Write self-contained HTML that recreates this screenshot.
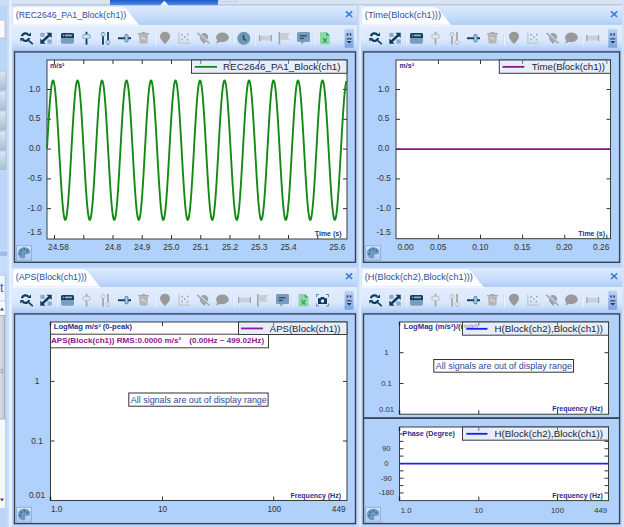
<!DOCTYPE html>
<html><head><meta charset="utf-8"><title>Signal Display</title>
<style>
html,body{margin:0;padding:0;background:#c3dafa;overflow:hidden}
svg{display:block}
text{font-family:"Liberation Sans",Arial,sans-serif}
.tk{font-size:8.3px;fill:#333}
.tks{font-size:7.7px}
.lg{font-size:9.75px;fill:#23232f}
.tab{font-size:9.4px;fill:#2f4e94}
.ax{font-size:7px;font-weight:bold;fill:#21328f}
.msg{font-size:9px;fill:#2b4a9d}
</style></head><body>
<svg width="624" height="527" viewBox="0 0 624 527">
<defs>
<linearGradient id="tabbar" x1="0" y1="0" x2="0" y2="1"><stop offset="0" stop-color="#deeafc"/><stop offset="0.5" stop-color="#cadffb"/><stop offset="1" stop-color="#b2d0fb"/></linearGradient>
<linearGradient id="tool" x1="0" y1="0" x2="0" y2="1"><stop offset="0" stop-color="#e2edfd"/><stop offset="0.55" stop-color="#dce9fc"/><stop offset="0.74" stop-color="#cfe1fb"/><stop offset="0.95" stop-color="#b2d0fa"/><stop offset="1" stop-color="#aacaf8"/></linearGradient>
<linearGradient id="ovf" x1="0" y1="0" x2="0" y2="1"><stop offset="0" stop-color="#bcd4f6"/><stop offset="0.5" stop-color="#94b8ec"/><stop offset="1" stop-color="#7ea5e0"/></linearGradient>
<linearGradient id="palbg" x1="0" y1="0" x2="0" y2="1"><stop offset="0" stop-color="#d6e5fb"/><stop offset="1" stop-color="#a9c8f5"/></linearGradient>
<linearGradient id="btn" x1="0" y1="0" x2="0" y2="1"><stop offset="0" stop-color="#dfe8f1"/><stop offset="1" stop-color="#a8bfd4"/></linearGradient>
<linearGradient id="topsel" x1="0" y1="0" x2="0" y2="1"><stop offset="0" stop-color="#1d5dc0"/><stop offset="1" stop-color="#4d90e6"/></linearGradient>
<linearGradient id="thumb" x1="0" y1="0" x2="1" y2="0"><stop offset="0" stop-color="#dde2e8"/><stop offset="1" stop-color="#c3c9d2"/></linearGradient>
</defs>

<rect x="0" y="0" width="624" height="527" fill="#c3dafa"/>
<rect x="0" y="0" width="624" height="5" fill="#c5daf7"/>
<rect x="12" y="0" width="612" height="4.5" fill="#dae4f2"/><rect x="12" y="3.9" width="612" height="1.9" fill="#bccade"/>
<rect x="110" y="0" width="108" height="5.2" fill="url(#topsel)"/><path d="M160 5.4 L164.3 0.8 L168.6 5.4 Z" fill="#f4f8fe"/>
<path d="M218.5 0 V1.2 H237 V0" fill="#eef3fa" stroke="#a9bcd8" stroke-width="0.8"/>
<rect x="622" y="0" width="2" height="527" fill="#d3e2f6"/>
<rect x="0" y="0" width="8" height="527" fill="#bcd6f8"/>
<rect x="0" y="0" width="8" height="5" fill="#cadcf6"/>
<rect x="7" y="0" width="2.4" height="527" fill="#cbdef9"/><rect x="9.2" y="0" width="2.6" height="527" fill="#e9f1fd"/>
<rect x="-1" y="20" width="6" height="18" fill="#fbfbfd" stroke="#d9b9c4" stroke-width="1"/>
<rect x="-1" y="71" width="7" height="18.6" fill="url(#btn)" stroke="#9fb6cf" stroke-width="0.6"/>
<rect x="-1" y="91" width="7" height="18.6" fill="url(#btn)" stroke="#9fb6cf" stroke-width="0.6"/>
<rect x="-1" y="111" width="7" height="18.6" fill="url(#btn)" stroke="#9fb6cf" stroke-width="0.6"/>
<rect x="-1" y="131" width="7" height="18.6" fill="url(#btn)" stroke="#9fb6cf" stroke-width="0.6"/>
<rect x="-1" y="151" width="7" height="18.6" fill="url(#btn)" stroke="#9fb6cf" stroke-width="0.6"/>
<rect x="0" y="251" width="7.2" height="5" fill="#9dbdec"/><rect x="0" y="250.4" width="7.2" height="0.9" fill="#dbe8fb"/>
<rect x="0" y="256" width="7.2" height="19" fill="#c7dcf9"/>
<rect x="-1" y="275" width="6.2" height="26" fill="#f0f5fd" stroke="#a7c0e6" stroke-width="0.8"/>
<text x="0" y="292.4" font-size="12.5" fill="#3d5fa6">t</text>
<rect x="0" y="301.5" width="5.4" height="206.5" fill="#f5f8fd"/><rect x="5.2" y="275" width="0.8" height="233" fill="#b6cdee"/>
<path d="M0 310.4 L2 307.6 L4 310.4 Z" fill="#3b4a66"/>
<rect x="-1" y="315.5" width="5.6" height="103.5" fill="url(#thumb)" stroke="#9aa5b5" stroke-width="0.8"/>
<path d="M0.5 369.5 H3.5 M0.5 371.2 H3.5 M0.5 372.9 H3.5" stroke="#8893a3" stroke-width="0.7"/>
<path d="M0 498.6 L2 501.4 L4 498.6 Z" fill="#3b4a66"/>
<rect x="0" y="508" width="7.2" height="19" fill="#bcd6f8"/>
<rect x="12" y="5.6" width="345" height="19" fill="url(#tabbar)"/>
<rect x="12" y="23.8" width="345" height="1.5" fill="#a2bee7"/>
<path d="M12.6 24.4 V9.7 Q12.6 6.7 15.6 6.7 H121.6 Q125.1 6.7 127.1 9.3 L138.6 24.4 Z" fill="#fdfeff" stroke="#d5e3f8" stroke-width="0.8"/>
<text class="tab" x="15.8" y="18" textLength="110.3" lengthAdjust="spacingAndGlyphs">(REC2646_PA1_Block(ch1))</text>
<path d="M346 11.4 l6.2 5.6 M352.2 11.4 l-6.2 5.6" stroke="#3579d8" stroke-width="1.5" fill="none"/>
<rect x="12" y="24.6" width="345" height="26" fill="url(#tool)"/>
<rect x="12" y="24.6" width="127" height="1" fill="#fdfeff"/>
<rect x="12" y="50.2" width="345" height="1.6" fill="#a8c8f8"/>
<rect x="12" y="51.6" width="345" height="212.4" fill="#b9d4fa"/>
<g transform="translate(20.2,32.5)" fill="none" stroke="#0d3b5c" stroke-width="2.2">
<path d="M1.63 3.62 A3.8 3.8 0 0 1 8.21 2.16"/><path d="M8.97 5.58 A3.8 3.8 0 0 1 2.39 7.04"/>
<path d="M10.8 0 L10.8 3.6 L6.9 3.6 Z" fill="#0d3b5c" stroke="none"/>
<path d="M0.1 5.4 L4 5.4 L0.1 9 Z" fill="#0d3b5c" stroke="none"/>
<path d="M8.6 8.2 L12.6 11.7" stroke-width="1.6"/></g>
<g transform="translate(40,32.5)">
<rect x="0.4" y="0.4" width="4.2" height="4" fill="#8aaac6"/><rect x="7.4" y="6.9" width="4.3" height="4.2" fill="#8aaac6"/>
<path d="M2.6 8.9 L9.4 2.5" stroke="#0d3b5c" stroke-width="2.5"/>
<path d="M6.5 0.2 L11.7 0.2 L11.7 5.4 Z" fill="#0d3b5c"/><path d="M0.3 6 L0.3 11.2 L5.5 11.2 Z" fill="#0d3b5c"/></g>
<rect x="56.7" y="33.5" width="1.2" height="12" fill="#eef4fd"/><rect x="55.9" y="33.5" width="0.8" height="12" fill="#b9d2f5" opacity="0.6"/>
<g transform="translate(61,33)">
<rect x="0" y="0" width="13" height="10.8" rx="1.7" fill="#7b9dbc"/>
<path d="M0 4.9 V1.7 A1.7 1.7 0 0 1 1.7 0 H11.3 A1.7 1.7 0 0 1 13 1.7 V4.9 Z" fill="#14405e"/>
<rect x="1.9" y="1.6" width="1" height="1.7" fill="#8fb0cc"/><rect x="3.8" y="1.6" width="7.2" height="1.7" rx="0.5" fill="#8fb0cc"/></g>
<g transform="translate(86.5,31.8)">
<rect x="-0.9" y="0" width="1.8" height="12.8" fill="#0d3b5c"/>
<rect x="-3.7" y="2.8" width="7.4" height="3.6" rx="1.3" fill="#d2e5f6" stroke="#86acd0" stroke-width="1.1"/></g>
<g transform="translate(103,32)">
<rect x="-0.9" y="0" width="1.8" height="12.6" fill="#0d3b5c"/><rect x="4.1" y="0" width="1.8" height="12.6" fill="#0d3b5c"/>
<circle cx="0" cy="2.3" r="1.9" fill="#c4dcf2" stroke="#6f98bd" stroke-width="0.8"/>
<circle cx="5" cy="10.2" r="1.9" fill="#c4dcf2" stroke="#6f98bd" stroke-width="0.8"/></g>
<g transform="translate(118,34.5)">
<rect x="0" y="2.8" width="13" height="1.9" fill="#0d3b5c"/>
<rect x="7" y="0" width="3" height="7.4" rx="1" fill="#a9cdea" stroke="#3d6f96" stroke-width="0.8"/></g>
<g transform="translate(138,32)">
<path d="M1 2.6 H10 L9.3 11.6 H1.7 Z" fill="#b4b4b4"/><rect x="0" y="1" width="11" height="1.5" fill="#a9a9a9"/><rect x="3.6" y="0" width="3.8" height="1.2" fill="#a9a9a9"/>
<path d="M2.6 6 L5.1 3.7 V5.2 C7.7 5.2 8.5 7.2 8 9.8 C7.4 7.9 6.6 7 5.1 7 V8.3 Z" fill="#d2d2d2"/></g>
<rect x="154.7" y="33.5" width="1.2" height="12" fill="#eef4fd"/><rect x="153.9" y="33.5" width="0.8" height="12" fill="#b9d2f5" opacity="0.6"/>
<path transform="translate(160,31.7)" d="M5 12.6 C3.2 10 0 7.8 0 4.8 A5 4.8 0 0 1 10 4.8 C10 7.8 6.8 10 5 12.6 Z" fill="#999"/>
<g transform="translate(178,32.5)">
<path d="M0.8 0 V10.6 H12" fill="none" stroke="#bfc6d0" stroke-width="1.3"/>
<g fill="#a3a3a3"><rect x="3.3" y="1.6" width="1.6" height="1.6"/><rect x="9" y="1.2" width="1.6" height="1.6"/><rect x="6" y="3.8" width="1.6" height="1.6"/><rect x="3.2" y="6.2" width="1.6" height="1.6"/><rect x="8.6" y="6.4" width="1.6" height="1.6"/></g></g>
<g transform="translate(197,32.5)">
<path d="M7 11.4 C5.5 9.2 2.8 7.4 2.8 4.7 A4.2 4.1 0 0 1 11.2 4.7 C11.2 7.4 8.5 9.2 7 11.4 Z" fill="#9f9f9f"/>
<path d="M0.6 0.3 L12.6 10.6" stroke="#c9dcf8" stroke-width="2.6"/><path d="M0.4 0.6 L12.4 10.9" stroke="#9a9a9a" stroke-width="1.2"/></g>
<g transform="translate(215.6,32.6)" fill="#9a9a9a">
<ellipse cx="6.8" cy="4.8" rx="6.4" ry="4.8"/><path d="M2.2 7 L0.4 11 L5.6 9 Z"/></g>
<rect x="233.2" y="33.5" width="1.2" height="12" fill="#eef4fd"/><rect x="232.4" y="33.5" width="0.8" height="12" fill="#b9d2f5" opacity="0.6"/>
<g transform="translate(237.2,31.7)">
<circle cx="6.6" cy="6.6" r="6.5" fill="#6f97b6"/><path d="M6.3 3 V7 L9 9" fill="none" stroke="#1d5070" stroke-width="1.6"/></g>
<rect x="254.7" y="33.5" width="1.2" height="12" fill="#eef4fd"/><rect x="253.9" y="33.5" width="0.8" height="12" fill="#b9d2f5" opacity="0.6"/>
<g transform="translate(259,35)">
<rect x="0.6" y="0.8" width="11.8" height="4.6" fill="#c9cfd7"/><rect x="0" y="0" width="1.2" height="6.2" fill="#a2a2a2"/><rect x="11.8" y="0" width="1.2" height="6.2" fill="#a2a2a2"/></g>
<g transform="translate(278.6,32)">
<rect x="0" y="0" width="1.6" height="12.6" fill="#a4a4a4"/><path d="M1.6 1 H11.4 L8.8 4.4 L11.4 7.8 H1.6 Z" fill="#c8cdd4"/></g>
<g transform="translate(297,32)">
<path d="M1.5 0 H11.5 A1.5 1.5 0 0 1 13 1.5 V8.5 A1.5 1.5 0 0 1 11.5 10 H7.2 L4.4 12.6 V10 H1.5 A1.5 1.5 0 0 1 0 8.5 V1.5 A1.5 1.5 0 0 1 1.5 0 Z" fill="#7a9bb9"/>
<rect x="2.8" y="3" width="6.8" height="1.4" fill="#245676"/><rect x="2.8" y="5.7" width="4.2" height="1.4" fill="#245676"/></g>
<rect x="314" y="33.5" width="1.2" height="12" fill="#eef4fd"/><rect x="313.2" y="33.5" width="0.8" height="12" fill="#b9d2f5" opacity="0.6"/>
<g transform="translate(320,32)">
<path d="M1 0 H6.2 L9.8 3.6 V11.4 A1 1 0 0 1 8.8 12.4 H1 A1 1 0 0 1 0 11.4 V1 A1 1 0 0 1 1 0 Z" fill="#8fd6aa"/>
<path d="M6.2 0 L9.8 3.6 H6.2 Z" fill="#1fa358"/>
<path d="M3 6.2 L6.8 10.6 M6.8 6.2 L3 10.6" stroke="#22a45a" stroke-width="1.3" fill="none"/></g>
<g transform="translate(344.6,28.8)">
<rect x="0" y="0" width="9" height="19" fill="url(#ovf)"/>
<rect x="2.2" y="4.6" width="1.4" height="2" fill="#1d2a44"/><rect x="5.2" y="4.6" width="1.4" height="2" fill="#1d2a44"/>
<rect x="2.2" y="9.6" width="4.8" height="1.3" fill="#1d2a44"/><path d="M2 12 H7.2 L4.6 14.8 Z" fill="#1d2a44"/>
<rect x="2.4" y="10.9" width="4.6" height="0.9" fill="#e8f0fc"/></g>
<rect x="14.5" y="51.9" width="341" height="210.4" fill="#b0d1fc" stroke="#3a4250" stroke-width="1.4"/>
<g transform="translate(16,245.2)">
<rect x="0.5" y="0.5" width="15" height="15" fill="url(#palbg)" stroke="#8fb0e0" stroke-width="1"/>
<path d="M8.2 2 C11.6 2 14.3 4.2 14.3 6.6 C14.3 8.6 12.6 9.2 11 9 C9.6 8.8 8.8 9.6 9.2 10.8 C9.6 12.2 9 13.4 7.4 13.4 C4.2 13.4 2 10.9 2 7.8 C2 4.5 4.8 2 8.2 2 Z" fill="#6d9abc"/>
<g fill="#2f6689"><circle cx="4.3" cy="8.6" r="0.9"/><circle cx="5.2" cy="5.4" r="0.9"/><circle cx="8.3" cy="4" r="0.9"/><circle cx="11.3" cy="5.5" r="0.9"/></g></g>
<rect x="47" y="60" width="300" height="179" fill="#fff" stroke="#3c3c3c" stroke-width="1"/>
<path d="M54.5 60 v4 M54.5 239 v-4 M83.75 60 v4 M83.75 239 v-4 M113 60 v4 M113 239 v-4 M142.25 60 v4 M142.25 239 v-4 M171.5 60 v4 M171.5 239 v-4 M200.75 60 v4 M200.75 239 v-4 M230 60 v4 M230 239 v-4 M259.25 60 v4 M259.25 239 v-4 M288.5 60 v4 M288.5 239 v-4 M317.75 60 v4 M317.75 239 v-4 M47 89.5 h4 M347 89.5 h-4 M47 119.3 h4 M347 119.3 h-4 M47 149.1 h4 M347 149.1 h-4 M47 178.9 h4 M347 178.9 h-4 M47 208.6 h4 M347 208.6 h-4" stroke="#333" stroke-width="1" fill="none"/>
<path d="M47 148.41 L47.5 139.5 L48 130.77 L48.5 122.36 L49 114.4 L49.5 107.03 L50 100.37 L50.5 94.53 L51 89.6 L51.5 85.67 L52 82.8 L52.5 81.03 L53 80.4 L53.5 80.92 L54 82.57 L54.5 85.33 L55 89.16 L55.5 93.99 L56 99.75 L56.5 106.33 L57 113.63 L57.5 121.54 L58 129.91 L58.5 138.62 L59 147.52 L59.5 156.46 L60 165.3 L60.5 173.89 L61 182.09 L61.5 189.77 L62 196.79 L62.5 203.06 L63 208.45 L63.5 212.89 L64 216.3 L64.5 218.63 L65 219.83 L65.5 219.88 L66 218.8 L66.5 216.58 L67 213.28 L67.5 208.94 L68 203.64 L68.5 197.46 L69 190.5 L69.5 182.88 L70 174.73 L70.5 166.17 L71 157.35 L71.5 148.41 L72 139.5 L72.5 130.77 L73 122.36 L73.5 114.4 L74 107.03 L74.5 100.37 L75 94.53 L75.5 89.6 L76 85.67 L76.5 82.8 L77 81.03 L77.5 80.4 L78 80.92 L78.5 82.57 L79 85.33 L79.5 89.16 L80 93.99 L80.5 99.75 L81 106.33 L81.5 113.63 L82 121.54 L82.5 129.91 L83 138.62 L83.5 147.52 L84 156.46 L84.5 165.3 L85 173.89 L85.5 182.09 L86 189.77 L86.5 196.79 L87 203.06 L87.5 208.45 L88 212.89 L88.5 216.3 L89 218.63 L89.5 219.83 L90 219.88 L90.5 218.8 L91 216.58 L91.5 213.28 L92 208.94 L92.5 203.64 L93 197.46 L93.5 190.5 L94 182.88 L94.5 174.73 L95 166.17 L95.5 157.35 L96 148.41 L96.5 139.5 L97 130.77 L97.5 122.36 L98 114.4 L98.5 107.03 L99 100.37 L99.5 94.53 L100 89.6 L100.5 85.67 L101 82.8 L101.5 81.03 L102 80.4 L102.5 80.92 L103 82.57 L103.5 85.33 L104 89.16 L104.5 93.99 L105 99.75 L105.5 106.33 L106 113.63 L106.5 121.54 L107 129.91 L107.5 138.62 L108 147.52 L108.5 156.46 L109 165.3 L109.5 173.89 L110 182.09 L110.5 189.77 L111 196.79 L111.5 203.06 L112 208.45 L112.5 212.89 L113 216.3 L113.5 218.63 L114 219.83 L114.5 219.88 L115 218.8 L115.5 216.58 L116 213.28 L116.5 208.94 L117 203.64 L117.5 197.46 L118 190.5 L118.5 182.88 L119 174.73 L119.5 166.17 L120 157.35 L120.5 148.41 L121 139.5 L121.5 130.77 L122 122.36 L122.5 114.4 L123 107.03 L123.5 100.37 L124 94.53 L124.5 89.6 L125 85.67 L125.5 82.8 L126 81.03 L126.5 80.4 L127 80.92 L127.5 82.57 L128 85.33 L128.5 89.16 L129 93.99 L129.5 99.75 L130 106.33 L130.5 113.63 L131 121.54 L131.5 129.91 L132 138.62 L132.5 147.52 L133 156.46 L133.5 165.3 L134 173.89 L134.5 182.09 L135 189.77 L135.5 196.79 L136 203.06 L136.5 208.45 L137 212.89 L137.5 216.3 L138 218.63 L138.5 219.83 L139 219.88 L139.5 218.8 L140 216.58 L140.5 213.28 L141 208.94 L141.5 203.64 L142 197.46 L142.5 190.5 L143 182.88 L143.5 174.73 L144 166.17 L144.5 157.35 L145 148.41 L145.5 139.5 L146 130.77 L146.5 122.36 L147 114.4 L147.5 107.03 L148 100.37 L148.5 94.53 L149 89.6 L149.5 85.67 L150 82.8 L150.5 81.03 L151 80.4 L151.5 80.92 L152 82.57 L152.5 85.33 L153 89.16 L153.5 93.99 L154 99.75 L154.5 106.33 L155 113.63 L155.5 121.54 L156 129.91 L156.5 138.62 L157 147.52 L157.5 156.46 L158 165.3 L158.5 173.89 L159 182.09 L159.5 189.77 L160 196.79 L160.5 203.06 L161 208.45 L161.5 212.89 L162 216.3 L162.5 218.63 L163 219.83 L163.5 219.88 L164 218.8 L164.5 216.58 L165 213.28 L165.5 208.94 L166 203.64 L166.5 197.46 L167 190.5 L167.5 182.88 L168 174.73 L168.5 166.17 L169 157.35 L169.5 148.41 L170 139.5 L170.5 130.77 L171 122.36 L171.5 114.4 L172 107.03 L172.5 100.37 L173 94.53 L173.5 89.6 L174 85.67 L174.5 82.8 L175 81.03 L175.5 80.4 L176 80.92 L176.5 82.57 L177 85.33 L177.5 89.16 L178 93.99 L178.5 99.75 L179 106.33 L179.5 113.63 L180 121.54 L180.5 129.91 L181 138.62 L181.5 147.52 L182 156.46 L182.5 165.3 L183 173.89 L183.5 182.09 L184 189.77 L184.5 196.79 L185 203.06 L185.5 208.45 L186 212.89 L186.5 216.3 L187 218.63 L187.5 219.83 L188 219.88 L188.5 218.8 L189 216.58 L189.5 213.28 L190 208.94 L190.5 203.64 L191 197.46 L191.5 190.5 L192 182.88 L192.5 174.73 L193 166.17 L193.5 157.35 L194 148.41 L194.5 139.5 L195 130.77 L195.5 122.36 L196 114.4 L196.5 107.03 L197 100.37 L197.5 94.53 L198 89.6 L198.5 85.67 L199 82.8 L199.5 81.03 L200 80.4 L200.5 80.92 L201 82.57 L201.5 85.33 L202 89.16 L202.5 93.99 L203 99.75 L203.5 106.33 L204 113.63 L204.5 121.54 L205 129.91 L205.5 138.62 L206 147.52 L206.5 156.46 L207 165.3 L207.5 173.89 L208 182.09 L208.5 189.77 L209 196.79 L209.5 203.06 L210 208.45 L210.5 212.89 L211 216.3 L211.5 218.63 L212 219.83 L212.5 219.88 L213 218.8 L213.5 216.58 L214 213.28 L214.5 208.94 L215 203.64 L215.5 197.46 L216 190.5 L216.5 182.88 L217 174.73 L217.5 166.17 L218 157.35 L218.5 148.41 L219 139.5 L219.5 130.77 L220 122.36 L220.5 114.4 L221 107.03 L221.5 100.37 L222 94.53 L222.5 89.6 L223 85.67 L223.5 82.8 L224 81.03 L224.5 80.4 L225 80.92 L225.5 82.57 L226 85.33 L226.5 89.16 L227 93.99 L227.5 99.75 L228 106.33 L228.5 113.63 L229 121.54 L229.5 129.91 L230 138.62 L230.5 147.52 L231 156.46 L231.5 165.3 L232 173.89 L232.5 182.09 L233 189.77 L233.5 196.79 L234 203.06 L234.5 208.45 L235 212.89 L235.5 216.3 L236 218.63 L236.5 219.83 L237 219.88 L237.5 218.8 L238 216.58 L238.5 213.28 L239 208.94 L239.5 203.64 L240 197.46 L240.5 190.5 L241 182.88 L241.5 174.73 L242 166.17 L242.5 157.35 L243 148.41 L243.5 139.5 L244 130.77 L244.5 122.36 L245 114.4 L245.5 107.03 L246 100.37 L246.5 94.53 L247 89.6 L247.5 85.67 L248 82.8 L248.5 81.03 L249 80.4 L249.5 80.92 L250 82.57 L250.5 85.33 L251 89.16 L251.5 93.99 L252 99.75 L252.5 106.33 L253 113.63 L253.5 121.54 L254 129.91 L254.5 138.62 L255 147.52 L255.5 156.46 L256 165.3 L256.5 173.89 L257 182.09 L257.5 189.77 L258 196.79 L258.5 203.06 L259 208.45 L259.5 212.89 L260 216.3 L260.5 218.63 L261 219.83 L261.5 219.88 L262 218.8 L262.5 216.58 L263 213.28 L263.5 208.94 L264 203.64 L264.5 197.46 L265 190.5 L265.5 182.88 L266 174.73 L266.5 166.17 L267 157.35 L267.5 148.41 L268 139.5 L268.5 130.77 L269 122.36 L269.5 114.4 L270 107.03 L270.5 100.37 L271 94.53 L271.5 89.6 L272 85.67 L272.5 82.8 L273 81.03 L273.5 80.4 L274 80.92 L274.5 82.57 L275 85.33 L275.5 89.16 L276 93.99 L276.5 99.75 L277 106.33 L277.5 113.63 L278 121.54 L278.5 129.91 L279 138.62 L279.5 147.52 L280 156.46 L280.5 165.3 L281 173.89 L281.5 182.09 L282 189.77 L282.5 196.79 L283 203.06 L283.5 208.45 L284 212.89 L284.5 216.3 L285 218.63 L285.5 219.83 L286 219.88 L286.5 218.8 L287 216.58 L287.5 213.28 L288 208.94 L288.5 203.64 L289 197.46 L289.5 190.5 L290 182.88 L290.5 174.73 L291 166.17 L291.5 157.35 L292 148.41 L292.5 139.5 L293 130.77 L293.5 122.36 L294 114.4 L294.5 107.03 L295 100.37 L295.5 94.53 L296 89.6 L296.5 85.67 L297 82.8 L297.5 81.03 L298 80.4 L298.5 80.92 L299 82.57 L299.5 85.33 L300 89.16 L300.5 93.99 L301 99.75 L301.5 106.33 L302 113.63 L302.5 121.54 L303 129.91 L303.5 138.62 L304 147.52 L304.5 156.46 L305 165.3 L305.5 173.89 L306 182.09 L306.5 189.77 L307 196.79 L307.5 203.06 L308 208.45 L308.5 212.89 L309 216.3 L309.5 218.63 L310 219.83 L310.5 219.88 L311 218.8 L311.5 216.58 L312 213.28 L312.5 208.94 L313 203.64 L313.5 197.46 L314 190.5 L314.5 182.88 L315 174.73 L315.5 166.17 L316 157.35 L316.5 148.41 L317 139.5 L317.5 130.77 L318 122.36 L318.5 114.4 L319 107.03 L319.5 100.37 L320 94.53 L320.5 89.6 L321 85.67 L321.5 82.8 L322 81.03 L322.5 80.4 L323 80.92 L323.5 82.57 L324 85.33 L324.5 89.16 L325 93.99 L325.5 99.75 L326 106.33 L326.5 113.63 L327 121.54 L327.5 129.91 L328 138.62 L328.5 147.52 L329 156.46 L329.5 165.3 L330 173.89 L330.5 182.09 L331 189.77 L331.5 196.79 L332 203.06 L332.5 208.45 L333 212.89 L333.5 216.3 L334 218.63 L334.5 219.83 L335 219.88 L335.5 218.8 L336 216.58 L336.5 213.28 L337 208.94 L337.5 203.64 L338 197.46 L338.5 190.5 L339 182.88 L339.5 174.73 L340 166.17 L340.5 157.35 L341 148.41 L341.5 139.5 L342 130.77 L342.5 122.36 L343 114.4 L343.5 107.03 L344 100.37 L344.5 94.53 L345 89.6 L345.5 85.67 L346 82.8 L346.5 81.03" fill="none" stroke="#148a14" stroke-width="1.9" stroke-linejoin="round"/>
<rect x="191.5" y="60" width="155.5" height="13.3" fill="#e6eefc" stroke="#3c3c3c" stroke-width="1"/><path d="M194.8 66.85 H217" stroke="#148a14" stroke-width="1.8"/><text class="lg" x="223" y="70.35" textLength="117.6" lengthAdjust="spacingAndGlyphs">REC2646_PA1_Block(ch1)</text>
<path d="M200.75 60 v4 M230 60 v4 M259.25 60 v4 M288.5 60 v4 M317.75 60 v4" stroke="#555" stroke-width="0.8"/>
<text class="ax" x="50" y="67.8" font-size="7.4">m/s²</text>
<text class="tk" x="34.7" y="91.5" text-anchor="middle">1.0</text>
<text class="tk" x="34.7" y="121.3" text-anchor="middle">0.5</text>
<text class="tk" x="34.7" y="151.1" text-anchor="middle">0.0</text>
<text class="tk" x="34.7" y="180.9" text-anchor="middle">-0.5</text>
<text class="tk" x="34.7" y="210.6" text-anchor="middle">-1.0</text>
<text class="tk" x="34.7" y="235.2" text-anchor="middle">-1.5</text>
<text class="tk" x="58.4" y="250" text-anchor="middle">24.58</text>
<text class="tk" x="113" y="250" text-anchor="middle">24.8</text>
<text class="tk" x="142.2" y="250" text-anchor="middle">24.9</text>
<text class="tk" x="171.4" y="250" text-anchor="middle">25.0</text>
<text class="tk" x="200.7" y="250" text-anchor="middle">25.1</text>
<text class="tk" x="230" y="250" text-anchor="middle">25.2</text>
<text class="tk" x="259.2" y="250" text-anchor="middle">25.3</text>
<text class="tk" x="288.5" y="250" text-anchor="middle">25.4</text>
<text class="tk" x="337.3" y="250" text-anchor="middle">25.6</text>
<text class="ax" x="341.5" y="236" text-anchor="end">Time (s)</text>
<rect x="361" y="5.6" width="261" height="19" fill="url(#tabbar)"/>
<rect x="361" y="23.8" width="261" height="1.5" fill="#a2bee7"/>
<path d="M361.6 24.4 V9.7 Q361.6 6.7 364.6 6.7 H433.6 Q437.1 6.7 439.1 9.3 L450.6 24.4 Z" fill="#fdfeff" stroke="#d5e3f8" stroke-width="0.8"/>
<text class="tab" x="364.8" y="18" textLength="76.2" lengthAdjust="spacingAndGlyphs">(Time(Block(ch1)))</text>
<path d="M611 11.4 l6.2 5.6 M617.2 11.4 l-6.2 5.6" stroke="#3579d8" stroke-width="1.5" fill="none"/>
<rect x="361" y="24.6" width="261" height="26" fill="url(#tool)"/>
<rect x="361" y="24.6" width="90" height="1" fill="#fdfeff"/>
<rect x="361" y="50.2" width="261" height="1.6" fill="#a8c8f8"/>
<rect x="361" y="51.6" width="261" height="212.4" fill="#b9d4fa"/>
<g transform="translate(369.2,32.5)" fill="none" stroke="#0d3b5c" stroke-width="2.2">
<path d="M1.63 3.62 A3.8 3.8 0 0 1 8.21 2.16"/><path d="M8.97 5.58 A3.8 3.8 0 0 1 2.39 7.04"/>
<path d="M10.8 0 L10.8 3.6 L6.9 3.6 Z" fill="#0d3b5c" stroke="none"/>
<path d="M0.1 5.4 L4 5.4 L0.1 9 Z" fill="#0d3b5c" stroke="none"/>
<path d="M8.6 8.2 L12.6 11.7" stroke-width="1.6"/></g>
<g transform="translate(389,32.5)">
<rect x="0.4" y="0.4" width="4.2" height="4" fill="#8aaac6"/><rect x="7.4" y="6.9" width="4.3" height="4.2" fill="#8aaac6"/>
<path d="M2.6 8.9 L9.4 2.5" stroke="#0d3b5c" stroke-width="2.5"/>
<path d="M6.5 0.2 L11.7 0.2 L11.7 5.4 Z" fill="#0d3b5c"/><path d="M0.3 6 L0.3 11.2 L5.5 11.2 Z" fill="#0d3b5c"/></g>
<rect x="405.7" y="33.5" width="1.2" height="12" fill="#eef4fd"/><rect x="404.9" y="33.5" width="0.8" height="12" fill="#b9d2f5" opacity="0.6"/>
<g transform="translate(410,33)">
<rect x="0" y="0" width="13" height="10.8" rx="1.7" fill="#7b9dbc"/>
<path d="M0 4.9 V1.7 A1.7 1.7 0 0 1 1.7 0 H11.3 A1.7 1.7 0 0 1 13 1.7 V4.9 Z" fill="#14405e"/>
<rect x="1.9" y="1.6" width="1" height="1.7" fill="#8fb0cc"/><rect x="3.8" y="1.6" width="7.2" height="1.7" rx="0.5" fill="#8fb0cc"/></g>
<g transform="translate(435.5,31.8)">
<rect x="-0.9" y="0" width="1.8" height="12.8" fill="#a8a8a8"/>
<rect x="-3.7" y="2.8" width="7.4" height="3.6" rx="1.3" fill="#e3eaf3" stroke="#bdc4cd" stroke-width="1.1"/></g>
<g transform="translate(452,32)">
<rect x="-0.9" y="0" width="1.8" height="12.6" fill="#a8a8a8"/><rect x="4.1" y="0" width="1.8" height="12.6" fill="#a8a8a8"/>
<circle cx="0" cy="2.3" r="1.9" fill="#dfe6ef" stroke="#b4bac2" stroke-width="0.8"/>
<circle cx="5" cy="10.2" r="1.9" fill="#dfe6ef" stroke="#b4bac2" stroke-width="0.8"/></g>
<g transform="translate(467,34.5)">
<rect x="0" y="2.8" width="13" height="1.9" fill="#0d3b5c"/>
<rect x="7" y="0" width="3" height="7.4" rx="1" fill="#a9cdea" stroke="#3d6f96" stroke-width="0.8"/></g>
<g transform="translate(487,32)">
<path d="M1 2.6 H10 L9.3 11.6 H1.7 Z" fill="#b4b4b4"/><rect x="0" y="1" width="11" height="1.5" fill="#a9a9a9"/><rect x="3.6" y="0" width="3.8" height="1.2" fill="#a9a9a9"/>
<path d="M2.6 6 L5.1 3.7 V5.2 C7.7 5.2 8.5 7.2 8 9.8 C7.4 7.9 6.6 7 5.1 7 V8.3 Z" fill="#d2d2d2"/></g>
<rect x="503.7" y="33.5" width="1.2" height="12" fill="#eef4fd"/><rect x="502.9" y="33.5" width="0.8" height="12" fill="#b9d2f5" opacity="0.6"/>
<path transform="translate(509,31.7)" d="M5 12.6 C3.2 10 0 7.8 0 4.8 A5 4.8 0 0 1 10 4.8 C10 7.8 6.8 10 5 12.6 Z" fill="#999"/>
<g transform="translate(527,32.5)">
<path d="M0.8 0 V10.6 H12" fill="none" stroke="#bfc6d0" stroke-width="1.3"/>
<g fill="#a3a3a3"><rect x="3.3" y="1.6" width="1.6" height="1.6"/><rect x="9" y="1.2" width="1.6" height="1.6"/><rect x="6" y="3.8" width="1.6" height="1.6"/><rect x="3.2" y="6.2" width="1.6" height="1.6"/><rect x="8.6" y="6.4" width="1.6" height="1.6"/></g></g>
<g transform="translate(546,32.5)">
<path d="M7 11.4 C5.5 9.2 2.8 7.4 2.8 4.7 A4.2 4.1 0 0 1 11.2 4.7 C11.2 7.4 8.5 9.2 7 11.4 Z" fill="#9f9f9f"/>
<path d="M0.6 0.3 L12.6 10.6" stroke="#c9dcf8" stroke-width="2.6"/><path d="M0.4 0.6 L12.4 10.9" stroke="#9a9a9a" stroke-width="1.2"/></g>
<g transform="translate(564.6,32.6)" fill="#9a9a9a">
<ellipse cx="6.8" cy="4.8" rx="6.4" ry="4.8"/><path d="M2.2 7 L0.4 11 L5.6 9 Z"/></g>
<rect x="582.2" y="33.5" width="1.2" height="12" fill="#eef4fd"/><rect x="581.4" y="33.5" width="0.8" height="12" fill="#b9d2f5" opacity="0.6"/>
<g transform="translate(586.2,35)">
<rect x="0.6" y="0.8" width="11.8" height="4.6" fill="#c9cfd7"/><rect x="0" y="0" width="1.2" height="6.2" fill="#a2a2a2"/><rect x="11.8" y="0" width="1.2" height="6.2" fill="#a2a2a2"/></g>
<g transform="translate(608.2,28.8)">
<rect x="0" y="0" width="9" height="19" fill="url(#ovf)"/>
<rect x="2.2" y="4.6" width="1.4" height="2" fill="#1d2a44"/><rect x="5.2" y="4.6" width="1.4" height="2" fill="#1d2a44"/>
<rect x="2.2" y="9.6" width="4.8" height="1.3" fill="#1d2a44"/><path d="M2 12 H7.2 L4.6 14.8 Z" fill="#1d2a44"/>
<rect x="2.4" y="10.9" width="4.6" height="0.9" fill="#e8f0fc"/></g>
<rect x="363.5" y="51.9" width="256.1" height="210.4" fill="#b0d1fc" stroke="#3a4250" stroke-width="1.4"/>
<g transform="translate(365,245.2)">
<rect x="0.5" y="0.5" width="15" height="15" fill="url(#palbg)" stroke="#8fb0e0" stroke-width="1"/>
<path d="M8.2 2 C11.6 2 14.3 4.2 14.3 6.6 C14.3 8.6 12.6 9.2 11 9 C9.6 8.8 8.8 9.6 9.2 10.8 C9.6 12.2 9 13.4 7.4 13.4 C4.2 13.4 2 10.9 2 7.8 C2 4.5 4.8 2 8.2 2 Z" fill="#6d9abc"/>
<g fill="#2f6689"><circle cx="4.3" cy="8.6" r="0.9"/><circle cx="5.2" cy="5.4" r="0.9"/><circle cx="8.3" cy="4" r="0.9"/><circle cx="11.3" cy="5.5" r="0.9"/></g></g>
<rect x="396" y="60" width="214.5" height="178.7" fill="#fff" stroke="#3c3c3c" stroke-width="1"/>
<path d="M438.4 60 v4 M438.4 238.7 v-4 M480.5 60 v4 M480.5 238.7 v-4 M522.6 60 v4 M522.6 238.7 v-4 M564.7 60 v4 M564.7 238.7 v-4 M606.8 60 v4 M606.8 238.7 v-4 M396 89.5 h4 M610.5 89.5 h-4 M396 119.3 h4 M610.5 119.3 h-4 M396 149.1 h4 M610.5 149.1 h-4 M396 178.9 h4 M610.5 178.9 h-4 M396 208.6 h4 M610.5 208.6 h-4" stroke="#333" stroke-width="1" fill="none"/>
<path d="M396 149.1 H610.5" stroke="#8a158a" stroke-width="1.9"/>
<rect x="499.3" y="60" width="111.2" height="13.3" fill="#e6eefc" stroke="#3c3c3c" stroke-width="1"/><path d="M502.5 66.85 H524.3" stroke="#8a158a" stroke-width="1.8"/><text class="lg" x="531.8" y="70.35" textLength="73.2" lengthAdjust="spacingAndGlyphs">Time(Block(ch1))</text>
<path d="M522.6 60 v4 M564.7 60 v4 M606.8 60 v4" stroke="#555" stroke-width="0.8"/>
<text class="ax" x="399.6" y="67.8" font-size="7.4">m/s²</text>
<text class="tk" x="383.7" y="91.5" text-anchor="middle">1.0</text>
<text class="tk" x="383.7" y="121.3" text-anchor="middle">0.5</text>
<text class="tk" x="383.7" y="151.1" text-anchor="middle">0.0</text>
<text class="tk" x="383.7" y="180.9" text-anchor="middle">-0.5</text>
<text class="tk" x="383.7" y="210.6" text-anchor="middle">-1.0</text>
<text class="tk" x="383.7" y="235.2" text-anchor="middle">-1.5</text>
<text class="tk" x="405.5" y="250.2" text-anchor="middle">0.00</text>
<text class="tk" x="438.2" y="250.2" text-anchor="middle">0.05</text>
<text class="tk" x="480.4" y="250.2" text-anchor="middle">0.10</text>
<text class="tk" x="522.4" y="250.2" text-anchor="middle">0.15</text>
<text class="tk" x="564.4" y="250.2" text-anchor="middle">0.20</text>
<text class="tk" x="601.2" y="250.2" text-anchor="middle">0.26</text>
<text class="ax" x="605" y="236.4" text-anchor="end">Time (s)</text>
<rect x="12" y="267.6" width="345" height="19" fill="url(#tabbar)"/>
<rect x="12" y="285.8" width="345" height="1.5" fill="#a2bee7"/>
<path d="M12.6 286.4 V271.7 Q12.6 268.7 15.6 268.7 H82.6 Q86.1 268.7 88.1 271.3 L99.6 286.4 Z" fill="#fdfeff" stroke="#d5e3f8" stroke-width="0.8"/>
<text class="tab" x="15.8" y="280" textLength="71" lengthAdjust="spacingAndGlyphs">(APS(Block(ch1)))</text>
<path d="M346 273.4 l6.2 5.6 M352.2 273.4 l-6.2 5.6" stroke="#3579d8" stroke-width="1.5" fill="none"/>
<rect x="12" y="286.6" width="345" height="26" fill="url(#tool)"/>
<rect x="12" y="286.6" width="88" height="1" fill="#fdfeff"/>
<rect x="12" y="312.2" width="345" height="1.6" fill="#a8c8f8"/>
<rect x="12" y="313.6" width="345" height="212.4" fill="#b9d4fa"/>
<g transform="translate(20.2,294.5)" fill="none" stroke="#0d3b5c" stroke-width="2.2">
<path d="M1.63 3.62 A3.8 3.8 0 0 1 8.21 2.16"/><path d="M8.97 5.58 A3.8 3.8 0 0 1 2.39 7.04"/>
<path d="M10.8 0 L10.8 3.6 L6.9 3.6 Z" fill="#0d3b5c" stroke="none"/>
<path d="M0.1 5.4 L4 5.4 L0.1 9 Z" fill="#0d3b5c" stroke="none"/>
<path d="M8.6 8.2 L12.6 11.7" stroke-width="1.6"/></g>
<g transform="translate(40,294.5)">
<rect x="0.4" y="0.4" width="4.2" height="4" fill="#8aaac6"/><rect x="7.4" y="6.9" width="4.3" height="4.2" fill="#8aaac6"/>
<path d="M2.6 8.9 L9.4 2.5" stroke="#0d3b5c" stroke-width="2.5"/>
<path d="M6.5 0.2 L11.7 0.2 L11.7 5.4 Z" fill="#0d3b5c"/><path d="M0.3 6 L0.3 11.2 L5.5 11.2 Z" fill="#0d3b5c"/></g>
<rect x="56.7" y="295.5" width="1.2" height="12" fill="#eef4fd"/><rect x="55.9" y="295.5" width="0.8" height="12" fill="#b9d2f5" opacity="0.6"/>
<g transform="translate(61,295)">
<rect x="0" y="0" width="13" height="10.8" rx="1.7" fill="#7b9dbc"/>
<path d="M0 4.9 V1.7 A1.7 1.7 0 0 1 1.7 0 H11.3 A1.7 1.7 0 0 1 13 1.7 V4.9 Z" fill="#14405e"/>
<rect x="1.9" y="1.6" width="1" height="1.7" fill="#8fb0cc"/><rect x="3.8" y="1.6" width="7.2" height="1.7" rx="0.5" fill="#8fb0cc"/></g>
<g transform="translate(86.5,293.8)">
<rect x="-0.9" y="0" width="1.8" height="12.8" fill="#a8a8a8"/>
<rect x="-3.7" y="2.8" width="7.4" height="3.6" rx="1.3" fill="#e3eaf3" stroke="#bdc4cd" stroke-width="1.1"/></g>
<g transform="translate(103,294)">
<rect x="-0.9" y="0" width="1.8" height="12.6" fill="#a8a8a8"/><rect x="4.1" y="0" width="1.8" height="12.6" fill="#a8a8a8"/>
<circle cx="0" cy="2.3" r="1.9" fill="#dfe6ef" stroke="#b4bac2" stroke-width="0.8"/>
<circle cx="5" cy="10.2" r="1.9" fill="#dfe6ef" stroke="#b4bac2" stroke-width="0.8"/></g>
<g transform="translate(118,296.5)">
<rect x="0" y="2.8" width="13" height="1.9" fill="#0d3b5c"/>
<rect x="7" y="0" width="3" height="7.4" rx="1" fill="#a9cdea" stroke="#3d6f96" stroke-width="0.8"/></g>
<g transform="translate(138,294)">
<path d="M1 2.6 H10 L9.3 11.6 H1.7 Z" fill="#b4b4b4"/><rect x="0" y="1" width="11" height="1.5" fill="#a9a9a9"/><rect x="3.6" y="0" width="3.8" height="1.2" fill="#a9a9a9"/>
<path d="M2.6 6 L5.1 3.7 V5.2 C7.7 5.2 8.5 7.2 8 9.8 C7.4 7.9 6.6 7 5.1 7 V8.3 Z" fill="#d2d2d2"/></g>
<rect x="154.7" y="295.5" width="1.2" height="12" fill="#eef4fd"/><rect x="153.9" y="295.5" width="0.8" height="12" fill="#b9d2f5" opacity="0.6"/>
<path transform="translate(160,293.7)" d="M5 12.6 C3.2 10 0 7.8 0 4.8 A5 4.8 0 0 1 10 4.8 C10 7.8 6.8 10 5 12.6 Z" fill="#999"/>
<g transform="translate(178,294.5)">
<path d="M0.8 0 V10.6 H12" fill="none" stroke="#bfc6d0" stroke-width="1.3"/>
<g fill="#a3a3a3"><rect x="3.3" y="1.6" width="1.6" height="1.6"/><rect x="9" y="1.2" width="1.6" height="1.6"/><rect x="6" y="3.8" width="1.6" height="1.6"/><rect x="3.2" y="6.2" width="1.6" height="1.6"/><rect x="8.6" y="6.4" width="1.6" height="1.6"/></g></g>
<g transform="translate(197,294.5)">
<path d="M7 11.4 C5.5 9.2 2.8 7.4 2.8 4.7 A4.2 4.1 0 0 1 11.2 4.7 C11.2 7.4 8.5 9.2 7 11.4 Z" fill="#9f9f9f"/>
<path d="M0.6 0.3 L12.6 10.6" stroke="#c9dcf8" stroke-width="2.6"/><path d="M0.4 0.6 L12.4 10.9" stroke="#9a9a9a" stroke-width="1.2"/></g>
<g transform="translate(215.6,294.6)" fill="#9a9a9a">
<ellipse cx="6.8" cy="4.8" rx="6.4" ry="4.8"/><path d="M2.2 7 L0.4 11 L5.6 9 Z"/></g>
<rect x="233.2" y="295.5" width="1.2" height="12" fill="#eef4fd"/><rect x="232.4" y="295.5" width="0.8" height="12" fill="#b9d2f5" opacity="0.6"/>
<g transform="translate(238,297)">
<rect x="0.6" y="0.8" width="11.8" height="4.6" fill="#c9cfd7"/><rect x="0" y="0" width="1.2" height="6.2" fill="#a2a2a2"/><rect x="11.8" y="0" width="1.2" height="6.2" fill="#a2a2a2"/></g>
<g transform="translate(257,294)">
<rect x="0" y="0" width="1.6" height="12.6" fill="#a4a4a4"/><path d="M1.6 1 H11.4 L8.8 4.4 L11.4 7.8 H1.6 Z" fill="#c8cdd4"/></g>
<g transform="translate(276,294)">
<path d="M1.5 0 H11.5 A1.5 1.5 0 0 1 13 1.5 V8.5 A1.5 1.5 0 0 1 11.5 10 H7.2 L4.4 12.6 V10 H1.5 A1.5 1.5 0 0 1 0 8.5 V1.5 A1.5 1.5 0 0 1 1.5 0 Z" fill="#7a9bb9"/>
<rect x="2.8" y="3" width="6.8" height="1.4" fill="#245676"/><rect x="2.8" y="5.7" width="4.2" height="1.4" fill="#245676"/></g>
<rect x="292.2" y="295.5" width="1.2" height="12" fill="#eef4fd"/><rect x="291.4" y="295.5" width="0.8" height="12" fill="#b9d2f5" opacity="0.6"/>
<g transform="translate(298.6,294)">
<path d="M1 0 H6.2 L9.8 3.6 V11.4 A1 1 0 0 1 8.8 12.4 H1 A1 1 0 0 1 0 11.4 V1 A1 1 0 0 1 1 0 Z" fill="#8fd6aa"/>
<path d="M6.2 0 L9.8 3.6 H6.2 Z" fill="#1fa358"/>
<path d="M3 6.2 L6.8 10.6 M6.8 6.2 L3 10.6" stroke="#22a45a" stroke-width="1.3" fill="none"/></g>
<g transform="translate(316,294)">
<path d="M0.5 3 V0.5 H3 M10 0.5 H12.5 V3 M12.5 9.5 V12 H10 M3 12 H0.5 V9.5" fill="none" stroke="#5f86a8" stroke-width="1"/>
<path d="M2 4.2 H4.2 L5 3 H8 L8.8 4.2 H11 V10 H2 Z" fill="#0d3b5c"/><circle cx="6.5" cy="7" r="1.7" fill="#dbe9fb"/></g>
<g transform="translate(344.6,290.8)">
<rect x="0" y="0" width="9" height="19" fill="url(#ovf)"/>
<rect x="2.2" y="4.6" width="1.4" height="2" fill="#1d2a44"/><rect x="5.2" y="4.6" width="1.4" height="2" fill="#1d2a44"/>
<rect x="2.2" y="9.6" width="4.8" height="1.3" fill="#1d2a44"/><path d="M2 12 H7.2 L4.6 14.8 Z" fill="#1d2a44"/>
<rect x="2.4" y="10.9" width="4.6" height="0.9" fill="#e8f0fc"/></g>
<rect x="14.5" y="313.9" width="341" height="209.7" fill="#b0d1fc" stroke="#3a4250" stroke-width="1.4"/>
<g transform="translate(16,506.8)">
<rect x="0.5" y="0.5" width="15" height="15" fill="url(#palbg)" stroke="#8fb0e0" stroke-width="1"/>
<path d="M8.2 2 C11.6 2 14.3 4.2 14.3 6.6 C14.3 8.6 12.6 9.2 11 9 C9.6 8.8 8.8 9.6 9.2 10.8 C9.6 12.2 9 13.4 7.4 13.4 C4.2 13.4 2 10.9 2 7.8 C2 4.5 4.8 2 8.2 2 Z" fill="#6d9abc"/>
<g fill="#2f6689"><circle cx="4.3" cy="8.6" r="0.9"/><circle cx="5.2" cy="5.4" r="0.9"/><circle cx="8.3" cy="4" r="0.9"/><circle cx="11.3" cy="5.5" r="0.9"/></g></g>
<rect x="50.5" y="322" width="296.5" height="178.5" fill="#fff" stroke="#3c3c3c" stroke-width="1"/>
<path d="M162.5 322 v4 M162.5 500.5 v-4 M273.7 322 v4 M273.7 500.5 v-4 M50.5 381.4 h4 M347 381.4 h-4 M50.5 441 h4 M347 441 h-4" stroke="#333" stroke-width="1" fill="none"/>
<path d="M50.5 322 v4 M50.5 500.5 v-4" stroke="#222" stroke-width="1.4"/>
<text class="ax" x="53.8" y="329.2" font-size="7.3" textLength="78.2" lengthAdjust="spacingAndGlyphs">LogMag m/s² (0-peak)</text>
<rect x="50.5" y="334.2" width="218" height="13.6" fill="#fff" stroke="#3c3c3c" stroke-width="1"/>
<text x="51" y="342.8" font-size="7.2" font-weight="bold" fill="#8c188c" textLength="130.2" lengthAdjust="spacingAndGlyphs">APS(Block(ch1)) RMS:0.0000 m/s²</text>
<text x="189.3" y="342.8" font-size="7.2" font-weight="bold" fill="#8c188c" textLength="74.8" lengthAdjust="spacingAndGlyphs">(0.00Hz ~ 499.02Hz)</text>
<rect x="238.5" y="322" width="108.5" height="12.5" fill="#e6eefc" stroke="#3c3c3c" stroke-width="1"/><path d="M241 328.45 H263" stroke="#96189a" stroke-width="1.8"/><text class="lg" x="269.8" y="331.95" textLength="70.7" lengthAdjust="spacingAndGlyphs">APS(Block(ch1))</text>
<path d="M273.7 322 v4" stroke="#555" stroke-width="0.8"/>
<rect x="128.8" y="393" width="139.3" height="13.2" fill="#fff" stroke="#333" stroke-width="1"/>
<text class="msg" x="130.8" y="403" textLength="136" lengthAdjust="spacingAndGlyphs">All signals are out of display range</text>
<text class="tk" x="37" y="384.4" text-anchor="middle">1</text>
<text class="tk" x="37" y="444" text-anchor="middle">0.1</text>
<text class="tk" x="37" y="497.6" text-anchor="middle">0.01</text>
<text class="tk" x="56.7" y="512" text-anchor="middle">1.0</text>
<text class="tk" x="162.5" y="512" text-anchor="middle">10</text>
<text class="tk" x="274.3" y="512" text-anchor="middle">100</text>
<text class="tk" x="338.7" y="512" text-anchor="middle">449</text>
<text class="ax" x="341" y="497.8" text-anchor="end">Frequency (Hz)</text>
<rect x="361" y="267.6" width="261" height="19" fill="url(#tabbar)"/>
<rect x="361" y="285.8" width="261" height="1.5" fill="#a2bee7"/>
<path d="M361.6 286.4 V271.7 Q361.6 268.7 364.6 268.7 H466.2 Q469.7 268.7 471.7 271.3 L483.2 286.4 Z" fill="#fdfeff" stroke="#d5e3f8" stroke-width="0.8"/>
<text class="tab" x="364.8" y="280" textLength="108" lengthAdjust="spacingAndGlyphs">(H(Block(ch2),Block(ch1)))</text>
<path d="M611 273.4 l6.2 5.6 M617.2 273.4 l-6.2 5.6" stroke="#3579d8" stroke-width="1.5" fill="none"/>
<rect x="361" y="286.6" width="261" height="26" fill="url(#tool)"/>
<rect x="361" y="286.6" width="122.6" height="1" fill="#fdfeff"/>
<rect x="361" y="312.2" width="261" height="1.6" fill="#a8c8f8"/>
<rect x="361" y="313.6" width="261" height="212.4" fill="#b9d4fa"/>
<g transform="translate(369.2,294.5)" fill="none" stroke="#0d3b5c" stroke-width="2.2">
<path d="M1.63 3.62 A3.8 3.8 0 0 1 8.21 2.16"/><path d="M8.97 5.58 A3.8 3.8 0 0 1 2.39 7.04"/>
<path d="M10.8 0 L10.8 3.6 L6.9 3.6 Z" fill="#0d3b5c" stroke="none"/>
<path d="M0.1 5.4 L4 5.4 L0.1 9 Z" fill="#0d3b5c" stroke="none"/>
<path d="M8.6 8.2 L12.6 11.7" stroke-width="1.6"/></g>
<g transform="translate(389,294.5)">
<rect x="0.4" y="0.4" width="4.2" height="4" fill="#8aaac6"/><rect x="7.4" y="6.9" width="4.3" height="4.2" fill="#8aaac6"/>
<path d="M2.6 8.9 L9.4 2.5" stroke="#0d3b5c" stroke-width="2.5"/>
<path d="M6.5 0.2 L11.7 0.2 L11.7 5.4 Z" fill="#0d3b5c"/><path d="M0.3 6 L0.3 11.2 L5.5 11.2 Z" fill="#0d3b5c"/></g>
<rect x="405.7" y="295.5" width="1.2" height="12" fill="#eef4fd"/><rect x="404.9" y="295.5" width="0.8" height="12" fill="#b9d2f5" opacity="0.6"/>
<g transform="translate(410,295)">
<rect x="0" y="0" width="13" height="10.8" rx="1.7" fill="#7b9dbc"/>
<path d="M0 4.9 V1.7 A1.7 1.7 0 0 1 1.7 0 H11.3 A1.7 1.7 0 0 1 13 1.7 V4.9 Z" fill="#14405e"/>
<rect x="1.9" y="1.6" width="1" height="1.7" fill="#8fb0cc"/><rect x="3.8" y="1.6" width="7.2" height="1.7" rx="0.5" fill="#8fb0cc"/></g>
<g transform="translate(435.5,293.8)">
<rect x="-0.9" y="0" width="1.8" height="12.8" fill="#a8a8a8"/>
<rect x="-3.7" y="2.8" width="7.4" height="3.6" rx="1.3" fill="#e3eaf3" stroke="#bdc4cd" stroke-width="1.1"/></g>
<g transform="translate(452,294)">
<rect x="-0.9" y="0" width="1.8" height="12.6" fill="#a8a8a8"/><rect x="4.1" y="0" width="1.8" height="12.6" fill="#a8a8a8"/>
<circle cx="0" cy="2.3" r="1.9" fill="#dfe6ef" stroke="#b4bac2" stroke-width="0.8"/>
<circle cx="5" cy="10.2" r="1.9" fill="#dfe6ef" stroke="#b4bac2" stroke-width="0.8"/></g>
<g transform="translate(467,296.5)">
<rect x="0" y="2.8" width="13" height="1.9" fill="#0d3b5c"/>
<rect x="7" y="0" width="3" height="7.4" rx="1" fill="#a9cdea" stroke="#3d6f96" stroke-width="0.8"/></g>
<g transform="translate(487,294)">
<path d="M1 2.6 H10 L9.3 11.6 H1.7 Z" fill="#b4b4b4"/><rect x="0" y="1" width="11" height="1.5" fill="#a9a9a9"/><rect x="3.6" y="0" width="3.8" height="1.2" fill="#a9a9a9"/>
<path d="M2.6 6 L5.1 3.7 V5.2 C7.7 5.2 8.5 7.2 8 9.8 C7.4 7.9 6.6 7 5.1 7 V8.3 Z" fill="#d2d2d2"/></g>
<rect x="503.7" y="295.5" width="1.2" height="12" fill="#eef4fd"/><rect x="502.9" y="295.5" width="0.8" height="12" fill="#b9d2f5" opacity="0.6"/>
<path transform="translate(509,293.7)" d="M5 12.6 C3.2 10 0 7.8 0 4.8 A5 4.8 0 0 1 10 4.8 C10 7.8 6.8 10 5 12.6 Z" fill="#999"/>
<g transform="translate(527,294.5)">
<path d="M0.8 0 V10.6 H12" fill="none" stroke="#bfc6d0" stroke-width="1.3"/>
<g fill="#a3a3a3"><rect x="3.3" y="1.6" width="1.6" height="1.6"/><rect x="9" y="1.2" width="1.6" height="1.6"/><rect x="6" y="3.8" width="1.6" height="1.6"/><rect x="3.2" y="6.2" width="1.6" height="1.6"/><rect x="8.6" y="6.4" width="1.6" height="1.6"/></g></g>
<g transform="translate(546,294.5)">
<path d="M7 11.4 C5.5 9.2 2.8 7.4 2.8 4.7 A4.2 4.1 0 0 1 11.2 4.7 C11.2 7.4 8.5 9.2 7 11.4 Z" fill="#9f9f9f"/>
<path d="M0.6 0.3 L12.6 10.6" stroke="#c9dcf8" stroke-width="2.6"/><path d="M0.4 0.6 L12.4 10.9" stroke="#9a9a9a" stroke-width="1.2"/></g>
<g transform="translate(564.6,294.6)" fill="#9a9a9a">
<ellipse cx="6.8" cy="4.8" rx="6.4" ry="4.8"/><path d="M2.2 7 L0.4 11 L5.6 9 Z"/></g>
<rect x="582.2" y="295.5" width="1.2" height="12" fill="#eef4fd"/><rect x="581.4" y="295.5" width="0.8" height="12" fill="#b9d2f5" opacity="0.6"/>
<g transform="translate(586.2,297)">
<rect x="0.6" y="0.8" width="11.8" height="4.6" fill="#c9cfd7"/><rect x="0" y="0" width="1.2" height="6.2" fill="#a2a2a2"/><rect x="11.8" y="0" width="1.2" height="6.2" fill="#a2a2a2"/></g>
<g transform="translate(608.2,290.8)">
<rect x="0" y="0" width="9" height="19" fill="url(#ovf)"/>
<rect x="2.2" y="4.6" width="1.4" height="2" fill="#1d2a44"/><rect x="5.2" y="4.6" width="1.4" height="2" fill="#1d2a44"/>
<rect x="2.2" y="9.6" width="4.8" height="1.3" fill="#1d2a44"/><path d="M2 12 H7.2 L4.6 14.8 Z" fill="#1d2a44"/>
<rect x="2.4" y="10.9" width="4.6" height="0.9" fill="#e8f0fc"/></g>
<rect x="363.5" y="313.9" width="256.1" height="209.7" fill="#b0d1fc" stroke="#3a4250" stroke-width="1.4"/>
<g transform="translate(365,506.8)">
<rect x="0.5" y="0.5" width="15" height="15" fill="url(#palbg)" stroke="#8fb0e0" stroke-width="1"/>
<path d="M8.2 2 C11.6 2 14.3 4.2 14.3 6.6 C14.3 8.6 12.6 9.2 11 9 C9.6 8.8 8.8 9.6 9.2 10.8 C9.6 12.2 9 13.4 7.4 13.4 C4.2 13.4 2 10.9 2 7.8 C2 4.5 4.8 2 8.2 2 Z" fill="#6d9abc"/>
<g fill="#2f6689"><circle cx="4.3" cy="8.6" r="0.9"/><circle cx="5.2" cy="5.4" r="0.9"/><circle cx="8.3" cy="4" r="0.9"/><circle cx="11.3" cy="5.5" r="0.9"/></g></g>
<rect x="399.5" y="322" width="209" height="92.2" fill="#fff" stroke="#3c3c3c" stroke-width="1"/>
<path d="M478.8 322 v4 M478.8 414.2 v-4 M557.5 322 v4 M557.5 414.2 v-4 M399.5 352.7 h4 M608.5 352.7 h-4 M399.5 383.5 h4 M608.5 383.5 h-4" stroke="#333" stroke-width="1" fill="none"/>
<path d="M399.5 322 v4 M399.5 414.2 v-4" stroke="#222" stroke-width="1.4"/>
<text class="ax" x="403.8" y="329.2" font-size="7.3" textLength="75" lengthAdjust="spacingAndGlyphs">LogMag (m/s²)/(m/s²)</text>
<rect x="462.5" y="322" width="146" height="13.2" fill="#e6eefc" stroke="#3c3c3c" stroke-width="1"/><path d="M466.3 328.8 H487.5" stroke="#1c1cf0" stroke-width="1.8"/><text class="lg" x="494.5" y="332.3" textLength="108.5" lengthAdjust="spacingAndGlyphs">H(Block(ch2),Block(ch1))</text>
<path d="M478.8 322 v4 M557.5 322 v4" stroke="#555" stroke-width="0.8"/>
<text x="464" y="328" font-size="6" fill="#33408a" opacity="0.7">m/s²)</text>
<rect x="433.8" y="359.5" width="139.7" height="12.7" fill="#fff" stroke="#333" stroke-width="1"/>
<text class="msg" x="435.8" y="369.3" textLength="136.2" lengthAdjust="spacingAndGlyphs">All signals are out of display range</text>
<text class="tk tks" x="386.5" y="355.3" text-anchor="middle">1</text>
<text class="tk tks" x="386.5" y="385.8" text-anchor="middle">0.1</text>
<text class="tk tks" x="386.5" y="412.4" text-anchor="middle">0.01</text>
<text class="ax" x="602.8" y="411" text-anchor="end">Frequency (Hz)</text>
<rect x="363.8" y="417.2" width="255.8" height="1.8" fill="#3a4250"/>
<rect x="399.5" y="427" width="209" height="73.6" fill="#fff" stroke="#3c3c3c" stroke-width="1"/>
<path d="M478.8 427 v4 M478.8 500.6 v-4 M557.5 427 v4 M557.5 500.6 v-4 M399.5 434 h4 M608.5 434 h-4 M399.5 441.37 h4 M608.5 441.37 h-4 M399.5 448.74 h4 M608.5 448.74 h-4 M399.5 456.11 h4 M608.5 456.11 h-4 M399.5 463.48 h4 M608.5 463.48 h-4 M399.5 470.85 h4 M608.5 470.85 h-4 M399.5 478.22 h4 M608.5 478.22 h-4 M399.5 485.59 h4 M608.5 485.59 h-4 M399.5 492.96 h4 M608.5 492.96 h-4" stroke="#333" stroke-width="1" fill="none"/>
<path d="M399.5 427 v4 M399.5 500.6 v-4" stroke="#222" stroke-width="1.4"/>
<path d="M399.5 463.6 H608.5" stroke="#2222ee" stroke-width="1.9"/>
<text class="ax" x="402.6" y="435.6" font-size="7.3" textLength="52.4" lengthAdjust="spacingAndGlyphs">Phase (Degree)</text>
<rect x="462.5" y="427" width="146" height="13.2" fill="#e6eefc" stroke="#3c3c3c" stroke-width="1"/><path d="M466.3 433.8 H487.5" stroke="#1c1cf0" stroke-width="1.8"/><text class="lg" x="494.5" y="437.3" textLength="108.5" lengthAdjust="spacingAndGlyphs">H(Block(ch2),Block(ch1))</text>
<path d="M478.8 427 v4 M557.5 427 v4" stroke="#555" stroke-width="0.8"/>
<text class="tk tks" x="386.3" y="451.2" text-anchor="middle">90</text>
<text class="tk tks" x="386.3" y="465.9" text-anchor="middle">0</text>
<text class="tk tks" x="386.3" y="480.6" text-anchor="middle">-90</text>
<text class="tk tks" x="386.3" y="495.3" text-anchor="middle">-180</text>
<text class="tk tks" x="406.2" y="512.8" text-anchor="middle">1.0</text>
<text class="tk tks" x="478.8" y="512.8" text-anchor="middle">10</text>
<text class="tk tks" x="557.5" y="512.8" text-anchor="middle">100</text>
<text class="tk tks" x="600.6" y="512.8" text-anchor="middle">449</text>
<text class="ax" x="602.8" y="497.8" text-anchor="end">Frequency (Hz)</text>
<rect x="357.2" y="5" width="2.2" height="522" fill="#c4dbf9"/><rect x="359.2" y="5" width="1.9" height="522" fill="#e3eefc"/>
<rect x="12.4" y="263.4" width="344.8" height="4" fill="#b8d3fa"/><rect x="361" y="263.4" width="261" height="4" fill="#b8d3fa"/>
</svg></body></html>
